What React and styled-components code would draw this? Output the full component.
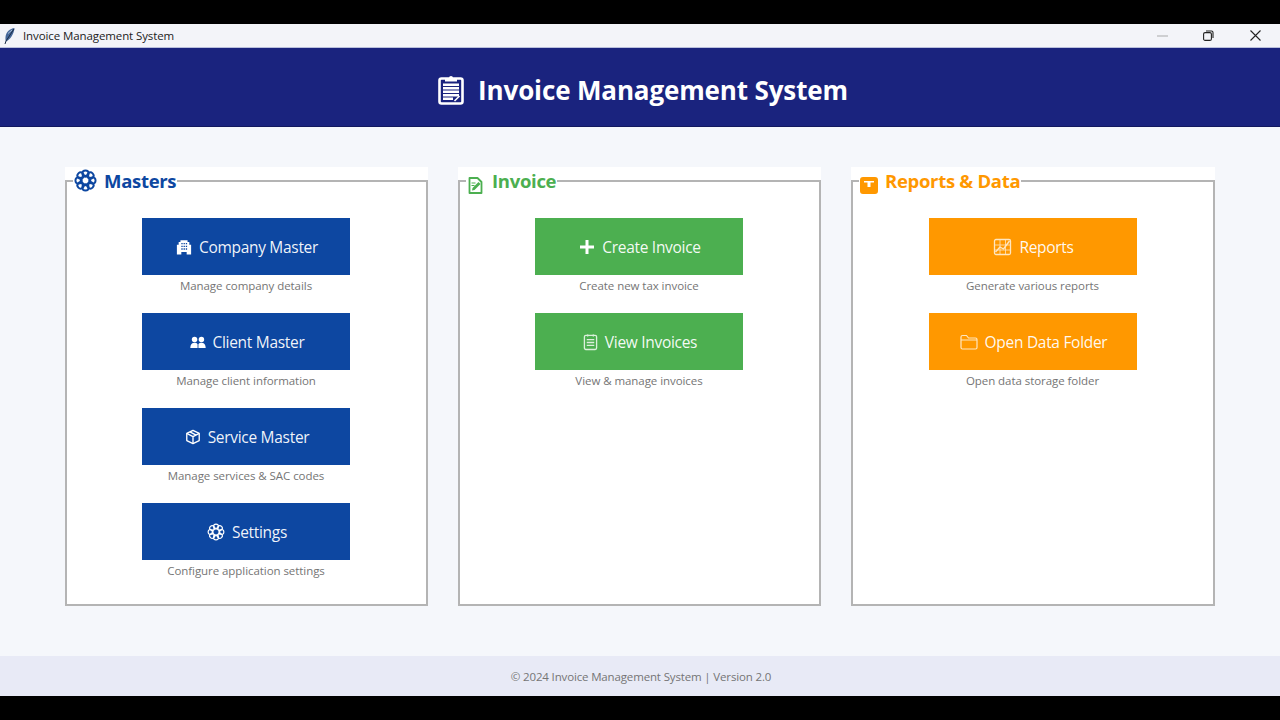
import React from "react";
import styled, { createGlobalStyle } from "styled-components";

const FONT = `"Open Sans", "Noto Sans", "Liberation Sans", sans-serif`;

const colors = {
  blue: "#0d47a1",
  green: "#4caf50",
  orange: "#ff9800",
};

const GlobalStyle = createGlobalStyle`
  html, body {
    margin: 0;
    padding: 0;
    background: #000;
  }
  * {
    box-sizing: border-box;
  }
`;

const Screen = styled.div`
  display: flex;
  flex-direction: column;
  width: 1280px;
  height: 720px;
  padding: 24px 0;
  background: #000;
  font-family: ${FONT};
  overflow: hidden;
`;

const TitleBar = styled.div`
  display: flex;
  align-items: center;
  height: 24px;
  padding-left: 3px;
  background: #f3f4f9;
  border-bottom: 1px solid #b9bfdc;
`;

const AppName = styled.span`
  margin-left: 7px;
  font-size: 11.5px;
  letter-spacing: -0.1px;
  color: #222;
`;

const WindowControls = styled.div`
  display: flex;
  margin-left: auto;
  margin-right: 1px;
`;

const WindowButton = styled.div`
  display: flex;
  align-items: center;
  justify-content: center;
  width: 46.8px;
  height: 23px;
`;

const Header = styled.header`
  display: flex;
  align-items: center;
  justify-content: center;
  gap: 14px;
  height: 79px;
  padding: 6px 0 0 6px;
  background: #1a237e;
  border-bottom: 1px solid #12185e;
`;

const HeaderTitle = styled.h1`
  margin: 0;
  font-size: 26px;
  font-weight: 700;
  letter-spacing: -0.14px;
  color: #fff;
`;

const Main = styled.main`
  flex: 1;
  display: grid;
  grid-template-columns: 363px 363px 364px;
  gap: 30px;
  padding: 40px 65px 50px;
  background: #f5f7fb;
`;

const Panel = styled.section`
  display: flex;
  background: #fff;
`;

const Group = styled.fieldset`
  flex: 1;
  display: flex;
  flex-direction: column;
  align-items: center;
  gap: 12px;
  min-width: 0;
  margin: 0;
  padding: 23px 1px 0 0;
  border: 2px solid #b4b4b4;
`;

const GroupLegend = styled.legend`
  display: flex;
  align-items: center;
  gap: 7px;
  height: 28px;
  margin-left: 6px;
  padding: 0 1px 2px;
  font-size: 18.5px;
  font-weight: 700;
  letter-spacing: -0.3px;
  color: ${(props) => colors[props.$tone]};
`;

const LegendIcon = styled.span`
  display: flex;
  margin-top: ${(props) => props.$drop || 0}px;
`;

const Action = styled.div`
  display: flex;
  flex-direction: column;
  align-items: center;
  width: 208px;
`;

const ActionButton = styled.button`
  display: flex;
  align-items: center;
  justify-content: center;
  gap: 7px;
  width: 100%;
  height: 57px;
  padding: 0 0 0 2px;
  border: 0;
  background: ${(props) => colors[props.$tone]};
  font-family: inherit;
  font-size: 15.5px;
  letter-spacing: -0.3px;
  color: rgba(255, 255, 255, 0.94);
`;

const Hint = styled.div`
  height: 26px;
  line-height: 22px;
  font-size: 11.5px;
  letter-spacing: -0.06px;
  white-space: nowrap;
  color: #757575;
`;

const Footer = styled.footer`
  display: flex;
  align-items: center;
  justify-content: center;
  height: 40px;
  padding-left: 2px;
  background: #e8eaf6;
  font-size: 11.5px;
  letter-spacing: -0.15px;
  color: #757575;
`;

const Feather = () => (
  <svg width="13" height="18" viewBox="0 0 13 18">
    <path d="M11.5 1C7 1.5 3 5 2.5 10c-.2 2 0 3.500.5 4.500C7 13 11 7 11.500 1z" fill="#46689a" />
    <path d="M11 2 3 14M3 14l-1 3" stroke="#1b2c44" strokeWidth="1" fill="none" />
    <path d="M9 3 5 6.500" stroke="#a9bdd6" strokeWidth="1" />
  </svg>
);

const ClipboardLarge = () => (
  <svg width="26" height="30" viewBox="0 0 26 30">
    <rect x="1.500" y="3.500" width="23" height="25" rx="2" fill="none" stroke="#fff" strokeWidth="2.600" />
    <path d="M7 6.500V3h4a2 2 0 0 1 4 0h4v3.500z" fill="#fff" />
    <path d="M5 8.500h16v2.400H5zM5 12h16v2.400H5zM5 15.500h16v2.400H5zM5 19h16v2.400H5zM5 22.500h10v2.400H5z" fill="#fff" />
    <path d="M16.500 26l5-5" stroke="#fff" strokeWidth="1.600" />
  </svg>
);

// eight small rings round a hub, used for both Masters and Settings
const Flower = ({ size, color, width = 1.6 }) => {
  const lobes = [0, 45, 90, 135, 180, 225, 270, 315];
  return (
    <svg width={size} height={size} viewBox="0 0 24 24">
      <g fill="none" stroke={color} strokeWidth={width}>
        <circle cx="12" cy="12" r="5" />
        {lobes.map((angle) => (
          <circle key={angle} cx="12" cy="4.800" r="3.300" transform={`rotate(${angle} 12 12)`} />
        ))}
      </g>
    </svg>
  );
};

const Building = () => (
  <svg width="16" height="16" viewBox="0 0 18 17">
    <path
      fillRule="evenodd"
      fill="#fff"
      d="M5 1h8v2h2v3h2v11h-5v-3H6v3H1V6h2V3h2zM6 4v1.500h1.500V4zm2.500 0v1.500H10V4zM11 4v1.500h1.500V4zM6 7v1.500h1.500V7zm2.500 0v1.500H10V7zM11 7v1.500h1.500V7zM6 10v1.500h1.500V10zm2.500 0v1.500H10V10zM11 10v1.500h1.500V10z"
    />
  </svg>
);

const People = () => (
  <svg width="16" height="12" viewBox="0 0 18 14">
    <g fill="#fff">
      <circle cx="5" cy="4" r="3.200" />
      <circle cx="13" cy="4" r="3.200" />
      <path d="M0 14c0-4 2-6 5-6 1.500 0 2.800.5 3.500 1.500V14zM9.500 14V9.500C10.300 8.500 11.500 8 13 8c3 0 5 2 5 6z" />
    </g>
  </svg>
);

const Cube = () => (
  <svg width="16" height="16" viewBox="0 0 18 18">
    <g fill="none" stroke="#fff" strokeWidth="1.500" strokeLinejoin="round">
      <path d="M9 1.500 16 5v8l-7 3.500L2 13V5z" />
      <path d="M2 5l7 3.500L16 5M9 8.500v8M5.500 3.300l7 3.500" />
    </g>
  </svg>
);

const Plus = () => (
  <svg width="16" height="16" viewBox="0 0 16 16">
    <path d="M6.500 1h3v5.500H15v3H9.500V15h-3V9.500H1v-3h5.500z" fill="#fff" />
  </svg>
);

const ClipboardOutline = () => (
  <svg width="15" height="18" viewBox="0 0 16 18">
    <g fill="none" stroke="#dcefdc" strokeWidth="1.400">
      <rect x="1.500" y="2" width="13" height="15" rx="1.500" />
      <path d="M5 1v2M11 1v2M4 6.500h8M4 9.500h8M4 12.500h8" />
    </g>
  </svg>
);

const Chart = () => (
  <svg width="19" height="18" viewBox="0 0 18 18">
    <g fill="none" stroke="#ffe6c0" strokeLinejoin="round">
      <rect x="1" y="1.500" width="16" height="15" rx="1.500" strokeWidth="1.300" />
      <path d="M1 7h16M1 12h16M6.500 1.500v15M12 1.500v15" strokeWidth="0.800" />
      <path d="M2 14l4.500-5 3.500 2 6-8" strokeWidth="1.400" />
    </g>
  </svg>
);

const Folder = () => (
  <svg width="18" height="16" viewBox="0 0 18 16">
    <path
      d="M1 3a1.500 1.500 0 0 1 1.500-1.500h4L8.500 4h7A1.500 1.500 0 0 1 17 5.500v8a1.500 1.500 0 0 1-1.500 1.500h-13A1.500 1.500 0 0 1 1 13.500zM1 6h16"
      fill="none"
      stroke="#ffe6c0"
      strokeWidth="1.200"
    />
  </svg>
);

const Memo = () => (
  <svg width="18" height="17" viewBox="0 0 17 17">
    <path d="M2 1h8l4 4v11H2z" fill="none" stroke={colors.green} strokeWidth="1.800" strokeLinejoin="round" />
    <path d="M4.500 13.500 5 11l6-6 2 2-6 6z" fill={colors.green} />
    <path d="M4 6h4M4 8.500h3" stroke={colors.green} strokeWidth="1.200" />
  </svg>
);

const Crate = () => (
  <svg width="18" height="17" viewBox="0 0 18 17">
    <path
      fillRule="evenodd"
      fill={colors.orange}
      d="M3 0h12a3 3 0 0 1 3 3v11a3 3 0 0 1-3 3H3a3 3 0 0 1-3-3V3a3 3 0 0 1 3-3zM4 4v1.500h3.500V10h3V5.500H14V4z"
    />
  </svg>
);

const groups = [
  {
    title: "Masters",
    tone: "blue",
    icon: <Flower size={23} color={colors.blue} width={2} />,
    drop: 0,
    actions: [
      { label: "Company Master", hint: "Manage company details", icon: <Building /> },
      { label: "Client Master", hint: "Manage client information", icon: <People /> },
      { label: "Service Master", hint: "Manage services & SAC codes", icon: <Cube /> },
      { label: "Settings", hint: "Configure application settings", icon: <Flower size={18} color="#fff" width={1.500} /> },
    ],
  },
  {
    title: "Invoice",
    tone: "green",
    icon: <Memo />,
    drop: 10,
    actions: [
      { label: "Create Invoice", hint: "Create new tax invoice", icon: <Plus /> },
      { label: "View Invoices", hint: "View & manage invoices", icon: <ClipboardOutline /> },
    ],
  },
  {
    title: "Reports & Data",
    tone: "orange",
    icon: <Crate />,
    drop: 10,
    actions: [
      { label: "Reports", hint: "Generate various reports", icon: <Chart /> },
      { label: "Open Data Folder", hint: "Open data storage folder", icon: <Folder /> },
    ],
  },
];

export default function App() {
  return (
    <Screen>
      <GlobalStyle />
      <TitleBar>
        <Feather />
        <AppName>Invoice Management System</AppName>
        <WindowControls>
          <WindowButton>
            <svg width="11" height="2" viewBox="0 0 11 2">
              <path d="M0 1h11" stroke="#b5b5b8" strokeWidth="1.200" />
            </svg>
          </WindowButton>
          <WindowButton>
            <svg width="11" height="11" viewBox="0 0 11 11">
              <rect x="0.600" y="2.600" width="7.800" height="7.800" rx="1.500" fill="none" stroke="#222" strokeWidth="1.100" />
              <path d="M3 1h5.500A1.500 1.500 0 0 1 10 2.500V8" fill="none" stroke="#222" strokeWidth="1.100" />
            </svg>
          </WindowButton>
          <WindowButton>
            <svg width="11" height="11" viewBox="0 0 11 11">
              <path d="M0.500 0.500l10 10M10.500 0.500l-10 10" stroke="#222" strokeWidth="1.100" />
            </svg>
          </WindowButton>
        </WindowControls>
      </TitleBar>
      <Header>
        <ClipboardLarge />
        <HeaderTitle>Invoice Management System</HeaderTitle>
      </Header>
      <Main>
        {groups.map((group) => (
          <Panel key={group.title}>
            <Group>
              <GroupLegend $tone={group.tone}>
                <LegendIcon $drop={group.drop}>{group.icon}</LegendIcon>
                {group.title}
              </GroupLegend>
              {group.actions.map((action) => (
                <Action key={action.label}>
                  <ActionButton $tone={group.tone}>
                    {action.icon}
                    {action.label}
                  </ActionButton>
                  <Hint>{action.hint}</Hint>
                </Action>
              ))}
            </Group>
          </Panel>
        ))}
      </Main>
      <Footer>© 2024 Invoice Management System | Version 2.0</Footer>
    </Screen>
  );
}
